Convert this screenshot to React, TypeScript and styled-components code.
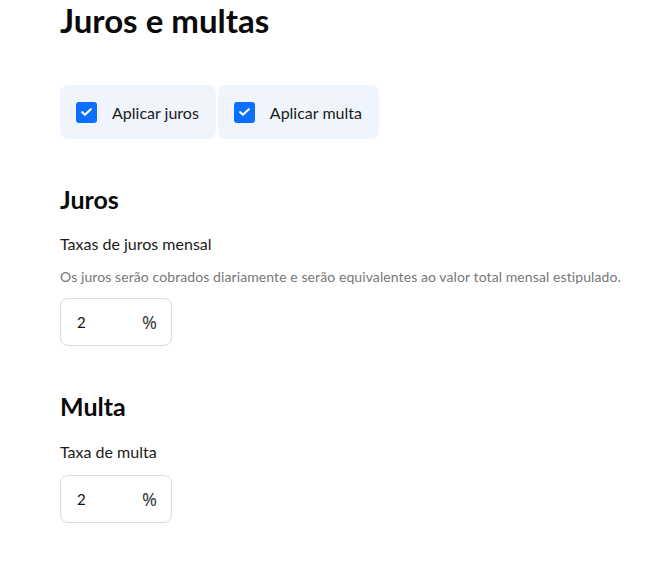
import React from "react";
import styled, { createGlobalStyle } from "styled-components";

const Global = createGlobalStyle`
  html, body { margin: 0; padding: 0; background: #ffffff; }
  body { font-family: Lato, "Noto Sans", Arial, sans-serif; color: #111; }
`;

const Page = styled.main`
  padding: 0 0 0 60px;
  display: flex;
  flex-direction: column;
  align-items: flex-start;
`;

const Title = styled.h1`
  margin: 0;
  font-size: 33px;
  line-height: 40px;
  font-weight: 700;
  color: #0a0a0a;
`;

const Toggles = styled.div`
  display: flex;
  gap: 2px;
  margin-top: 45px;
`;

const ToggleCard = styled.label`
  display: flex;
  align-items: center;
  gap: 15px;
  height: 54px;
  padding: 0 17px 0 16px;
  box-sizing: border-box;
  background: #f0f5fd;
  border-radius: 8px;
  font-size: 16px;
  color: #1a1a1a;
  cursor: pointer;
`;

const Box = styled.span`
  width: 21px;
  height: 21px;
  border-radius: 3px;
  background: #0b6efd;
  display: flex;
  align-items: center;
  justify-content: center;
`;

const Heading = styled.h2<{ $top: number }>`
  margin: ${(p) => p.$top}px 0 0;
  font-size: 25px;
  line-height: 30px;
  font-weight: 700;
  color: #0a0a0a;
`;

const FieldLabel = styled.div<{ $top: number }>`
  margin-top: ${(p) => p.$top}px;
  font-size: 16px;
  line-height: 22px;
  color: #1a1a1a;
`;

const Hint = styled.div`
  margin-top: 12px;
  font-size: 14px;
  line-height: 20px;
  letter-spacing: 0.09px;
  color: #777777;
  white-space: nowrap;
`;

const InputBox = styled.div<{ $top: number }>`
  margin-top: ${(p) => p.$top}px;
  width: 112px;
  height: 48px;
  box-sizing: border-box;
  border: 1px solid #dcdcdc;
  border-radius: 8px;
  display: flex;
  align-items: center;
  justify-content: space-between;
  padding: 0 14px 0 16px;
  font-size: 15px;
  color: #111;
`;

const Suffix = styled.span`
  font-family: "Noto Sans", Lato, sans-serif;
  font-size: 18px;
  line-height: 20px;
  color: #3a3a3a;
`;

const Check = () => (
  <Box>
    <svg width="11" height="8" viewBox="0 0 11 8" fill="none">
      <path d="M1.2 4.2 L4 6.8 L9.8 1.2" stroke="#fff" strokeWidth="2.1" strokeLinecap="round" strokeLinejoin="round" />
    </svg>
  </Box>
);

export default function App() {
  return (
    <>
      <Global />
      <Page>
        <Title>Juros e multas</Title>
        <Toggles>
          <ToggleCard>
            <Check />
            Aplicar juros
          </ToggleCard>
          <ToggleCard>
            <Check />
            Aplicar multa
          </ToggleCard>
        </Toggles>

        <Heading $top={45}>Juros</Heading>
        <FieldLabel $top={19}>Taxas de juros mensal</FieldLabel>
        <Hint>Os juros serão cobrados diariamente e serão equivalentes ao valor total mensal estipulado.</Hint>
        <InputBox $top={11}>
          <span>2</span>
          <Suffix>%</Suffix>
        </InputBox>

        <Heading $top={45}>Multa</Heading>
        <FieldLabel $top={20}>Taxa de multa</FieldLabel>
        <InputBox $top={12}>
          <span>2</span>
          <Suffix>%</Suffix>
        </InputBox>
      </Page>
    </>
  );
}
